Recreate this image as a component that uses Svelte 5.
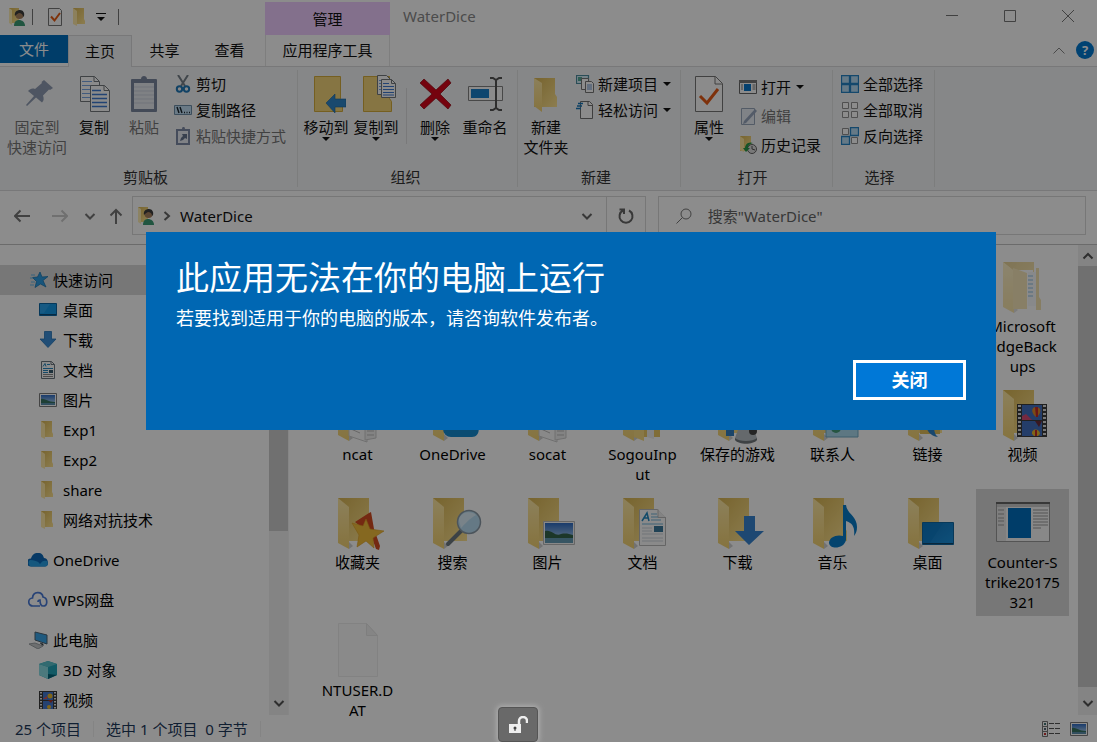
<script>
	const tabs = ['共享', '查看'];

	const sidebar = [
		{ icon: 'star', label: '快速访问', active: true },
		{ icon: 'desktop', label: '桌面', child: true },
		{ icon: 'down', label: '下载', child: true },
		{ icon: 'doc', label: '文档', child: true },
		{ icon: 'picture', label: '图片', child: true },
		{ icon: 'folder', label: 'Exp1', child: true },
		{ icon: 'folder', label: 'Exp2', child: true },
		{ icon: 'folder', label: 'share', child: true },
		{ icon: 'folder', label: '网络对抗技术', child: true },
		{ icon: 'onedrive', label: 'OneDrive', root: true },
		{ icon: 'wps', label: 'WPS网盘', root: true },
		{ icon: 'pc', label: '此电脑', root: true },
		{ icon: 'cube', label: '3D 对象', child: true },
		{ icon: 'film', label: '视频', child: true }
	];

	const files = [
		{ base: 'f-folder', over: 'f-pages', label: 'Microsoft\nEdgeBack\nups', last: true, faded: true },
		{ base: 'f-folder', over: 'f-papers', label: 'ncat' },
		{ base: 'f-folder', over: 'f-cloud', label: 'OneDrive' },
		{ base: 'f-folder', over: 'f-papers', label: 'socat' },
		{ base: 'f-folder', over: 'f-sub', label: 'SogouInp\nut' },
		{ base: 'f-folder', over: 'f-game', label: '保存的游戏' },
		{ base: 'f-folder', over: 'f-contact', label: '联系人' },
		{ base: 'f-folder', over: 'f-link', label: '链接' },
		{ base: 'f-folder', over: 'f-film', label: '视频' },
		{ base: 'f-folder', over: 'f-star', label: '收藏夹' },
		{ base: 'f-folder', over: 'f-search', label: '搜索' },
		{ base: 'f-folder', over: 'f-picture', label: '图片' },
		{ base: 'f-folder', over: 'f-doc', label: '文档' },
		{ base: 'f-folder', over: 'f-down', label: '下载' },
		{ base: 'f-folder', over: 'f-music', label: '音乐' },
		{ base: 'f-folder', over: 'f-desktop', label: '桌面' },
		{ base: 'f-app', label: 'Counter-S\ntrike20175\n321', selected: true },
		{ base: 'f-blank', label: 'NTUSER.D\nAT' }
	];

	let open = $state(true);
	let query = $state('');
</script>

{#snippet ico(name, cls)}
	<svg class={cls} aria-hidden="true"><use href="#{name}" /></svg>
{/snippet}

{#snippet big(icon, label, caret, disabled)}
	<button class="big" {disabled}>
		{@render ico(icon, 'big-icon')}
		<span>{label}</span>
		{#if caret}<i class="caret"></i>{/if}
	</button>
{/snippet}

{#snippet small(icon, label, caret, disabled)}
	<button class="small" {disabled}>
		{@render ico(icon, 'icon')}
		<span>{label}</span>
		{#if caret}<i class="caret"></i>{/if}
	</button>
{/snippet}

<svg class="sprite" aria-hidden="true">
	<defs>
		<linearGradient id="gold" x1="0" y1="0" x2="1" y2="1"><stop offset="0" stop-color="#d9b654" /><stop offset="1" stop-color="#ffe492" /></linearGradient>
		<linearGradient id="flap" x1="0" y1="0" x2="0" y2="1"><stop offset="0" stop-color="#ffe9a6" /><stop offset="1" stop-color="#f3d272" /></linearGradient>
		<linearGradient id="blue" x1="0" y1="0" x2="1" y2="1"><stop offset="0" stop-color="#0e74bd" /><stop offset="1" stop-color="#1c93e0" /></linearGradient>
		<linearGradient id="sky" x1="0" y1="0" x2="0" y2="1"><stop offset="0" stop-color="#2f6cc4" /><stop offset="1" stop-color="#c8e4f6" /></linearGradient>
	</defs>

	<symbol id="folder" viewBox="0 0 18 18"><path d="M2 0h11v11l1 2v3H2z" fill="url(#gold)" /><path d="M2 0l4 3v15l-4-2z" fill="#ffe9a8" /></symbol>
	<symbol id="user" viewBox="0 0 18 18"><path d="M0 0h10v15H0z" fill="url(#gold)" /><path d="M0 0l3 2v15l-3-2z" fill="#ffeeb5" /><path d="M5 18c0-4 2-6 5-6s6 2 6 6z" fill="#3c9c76" /><circle cx="10.500" cy="7" r="4" fill="#a8815f" /><path d="M6 8c-1-4 2-6 5-6s5 3 4 6l-1 1c0-3-2-4-4-4-2 1-3 2-4 3z" fill="#3d3d3d" /></symbol>
	<symbol id="checkdoc" viewBox="0 0 18 18"><path d="M2.500.5h11l2 2v15h-13z" fill="#fdfdfd" stroke="#777" /><path d="M5 8.500l3.500 4L14 5" fill="none" stroke="#e55b13" stroke-width="2" /></symbol>
	<symbol id="star" viewBox="0 0 18 18"><path d="M10 1l2 5 6-.5-5 4 3 6.500-5.500-3L5 16.500l1.500-6-4-4 5-.5z" fill="#2d9be0" stroke="#1471ad" stroke-width=".7" /><path d="M1 4h4M0 7h3M1 11h4M0 14h4" stroke="#62b3e6" /></symbol>
	<symbol id="desktop" viewBox="0 0 18 18"><path d="M.5 2.500h17v12H.5z" fill="#1599e8" stroke="#0c67a4" /><path d="M1 3h10L5 12H1z" fill="#38aef2" opacity=".6" /><path d="M1 13.500h16" stroke="#0d4e7a" /></symbol>
	<symbol id="down" viewBox="0 0 18 18"><path d="M5.500.5h7V8H17l-8 8.500L1 8h4.500z" fill="#3d8fd8" stroke="#2574b8" stroke-width=".8" /></symbol>
	<symbol id="doc" viewBox="0 0 18 18"><path d="M2.500.5h10l3 3v14h-13z" fill="#fdfdfd" stroke="#6c7780" /><path d="M12 .5v3h3.500" fill="none" stroke="#6c7780" /><path d="M4 5.500l2-3 1 3M8 3.500h3M4 7.500h10M4 9.500h5M4 11.500h5" stroke="#2585bd" fill="none" /><path d="M4 13.500h10M4 15.500h10" stroke="#8b8b8b" /><path d="M10 9h4v3h-4z" fill="#38596d" /></symbol>
	<symbol id="picture" viewBox="0 0 18 18"><path d="M.5 2.500h17v13H.5z" fill="#fff" stroke="#7d7d7d" /><path d="M2 4h14v10H2z" fill="url(#sky)" /><path d="M2 8c3-1 7 3 14 3v3H2z" fill="#377461" /><path d="M2 12h14v2H2z" fill="#5c91ae" /></symbol>
	<symbol id="onedrive" viewBox="0 0 20 18"><path d="M3 15.500a4 4 0 010-8C4 4 6 2 10 2c4 0 5 2 6 5 3 0 4 3 4 5s-1 3.500-3 3.500z" fill="#0d69b8" /><path d="M3 15.500c-3-1-3-5-1-6.500 4 0 8 1 10 4 2-3 4-4 7-3 2 3 0 5.500-2 5.500z" fill="#28a0e6" /></symbol>
	<symbol id="wps" viewBox="0 0 20 18"><path d="M12 15H5a4 4 0 01-.5-8C5 0 14 0 15 6c5 1 5 9 0 9-3 0-3-3-3-6-1 0-2 1-2 2" fill="none" stroke="#4a7bd8" stroke-width="1.700" /></symbol>
	<symbol id="pc" viewBox="0 0 20 18"><path d="M7 1l12 3v9L7 9z" fill="#39a5e8" stroke="#4d6373" /><path d="M12 12l3 1v2" stroke="#59656c" /><path d="M1 13l6-1 8 3-5 3z" fill="#c6cacd" stroke="#9ca2a6" /></symbol>
	<symbol id="cube" viewBox="0 0 18 18"><path d="M9 0l9 3v11l-9 4-9-4V3z" fill="#24a5b9" /><path d="M0 3l9 3v12l-9-4z" fill="#8adce3" /><path d="M0 3l9-3 9 3-9 3z" fill="#5cc2cc" /><path d="M9 13l9 1-9 4z" fill="#05657a" /></symbol>
	<symbol id="film" viewBox="0 0 18 18"><path d="M0 0h18v18H0z" fill="#3b3b3b" /><path d="M4 1h10v8H4zM4 10h10v8H4z" fill="#4478cf" /><path d="M2 1v17M16 1v17" stroke="#e8e8e8" stroke-width="2" stroke-dasharray="1.500 1.500" /><circle cx="11" cy="5" r="2.500" fill="#e9b82c" /><path d="M4 8l4-3v3z" fill="#d95656" /><path d="M9 9h5l-2 3z" fill="#a53427" /><circle cx="10" cy="16" r="2" fill="#e9b82c" /></symbol>

	<symbol id="pin" viewBox="0 0 40 38"><path d="M27 5l9 8-3 2-1-.5-6 6c1 3 1 5-1 7l-6-5L10 31l-1-1 8-9-6-5c2-2 4-3 7-2l7-6-.5-1z" fill="#8f9cb3" /></symbol>
	<symbol id="copy" viewBox="0 0 40 38"><path d="M6.500 1.500h14l5 5v20h-19z" fill="#fdfdfd" stroke="#74797d" /><path d="M20 1.500v5h5" fill="none" stroke="#74797d" /><path d="M8 6.500h10M8 10.500h14M8 14.500h14M8 18.500h14M8 22.500h14" stroke="#78a6e3" /><path d="M16.500 10.500h14l5 5v21h-19z" fill="#fdfdfd" stroke="#74797d" /><path d="M30 10.500v5h5" fill="none" stroke="#74797d" /><path d="M18 15.500h9M18 19.500h15M18 23.500h15M18 27.500h15M18 31.500h15" stroke="#3e7bd2" stroke-width="1.300" /></symbol>
	<symbol id="paste" viewBox="0 0 40 38"><path d="M8 4h24a1 1 0 011 1v31a1 1 0 01-1 1H8a1 1 0 01-1-1V5a1 1 0 011-1z" fill="#7a879f" /><path d="M10 8h20v26H10z" fill="#e8ebf1" /><path d="M10 12h20M10 16h20M10 20h20M10 24h20M10 28h20" stroke="#cbd2df" /><path d="M12 8V4h5c0-4 6-4 6 0h5v4z" fill="#7a879f" /></symbol>
	<symbol id="cut" viewBox="0 0 18 18"><path d="M4 0l7 11M14 0L7 11" stroke="#77818a" stroke-width="2" fill="none" /><circle cx="5.500" cy="14" r="2.700" fill="none" stroke="#1f79b8" stroke-width="2" /><circle cx="12.500" cy="14" r="2.700" fill="none" stroke="#1f79b8" stroke-width="2" /></symbol>
	<symbol id="path" viewBox="0 0 18 18"><path d="M.5 4.500h17v9H.5z" fill="#c1dff5" stroke="#6e8fa8" /><path d="M3 6l2 6M6 6l2 6M10 11.500h1M12.500 11.500h1M15 11.500h1" stroke="#18242c" stroke-width="1.400" /></symbol>
	<symbol id="shortcut" viewBox="0 0 18 18"><path d="M3 3h12v14H3z" fill="#e9edf4" stroke="#7f8ba6" stroke-width="2" /><path d="M6 4V2h2c0-3 3-3 3 0h2v2z" fill="#7f8ba6" /><path d="M6 14l1-3 2-2-1-2h5v5l-2-1-2 2z" fill="#66758f" /></symbol>
	<symbol id="moveto" viewBox="0 0 40 38"><path d="M8.500 1.500h26v22l2 3v10h-28z" fill="#f4d57b" stroke="#d5ad3c" /><path d="M20 28l9-9v5h11v8H29v6z" fill="#2f86c9" stroke="#1d65a0" stroke-width=".6" /></symbol>
	<symbol id="copyto" viewBox="0 0 40 38"><path d="M7.500 1.500h26v22l2 3v10h-28z" fill="#f4d57b" stroke="#d5ad3c" /><path d="M21.500.5h9l4 4v15h-13z" fill="#fdfdfd" stroke="#74797d" /><path d="M23 5.500h3M23 8.500h3M23 11.500h3M23 14.500h3" stroke="#78a6e3" /><path d="M25.500 4.500h10l4 4v14h-14z" fill="#fdfdfd" stroke="#74797d" /><path d="M35.500 4.500v4h4" fill="none" stroke="#74797d" /><path d="M27 8.500h6M27 11.500h11M27 14.500h11M27 17.500h11M27 20h11" stroke="#3e7bd2" /></symbol>
	<symbol id="delete" viewBox="0 0 40 38"><path d="M9 4l12 11L33 4l3 4-11 11 11 11-3 4-12-11L9 34l-4-4 12-11L5 8z" fill="#d6061a" stroke="#8e0914" stroke-width=".7" /></symbol>
	<symbol id="rename" viewBox="0 0 40 38"><path d="M3.500 11.500h34v14h-34z" fill="#fdfdfd" stroke="#848484" /><path d="M6 14h18v9H6z" fill="#1b80cb" /><path d="M25 3h3l3 2 3-2h3M25 35h3l3-2 3 2h3M31 4v30" fill="none" stroke="#555" stroke-width="2" /></symbol>
	<symbol id="newfolder" viewBox="0 0 40 38"><path d="M8 3h21v16l2 3v10H8z" fill="url(#gold)" /><path d="M8 3l8 5v29l-8-6z" fill="url(#flap)" /></symbol>
	<symbol id="newitem" viewBox="0 0 18 18"><path d="M.5.5h12v8H.5z" fill="#d5edf7" stroke="#4d8c9f" stroke-width="1.200" /><path d="M2 2h4v4H2z" fill="#55a896" /><path d="M5.500 3.500h7v11h-7z" fill="#fff" stroke="#777" /><path d="M9.500 6.500h6l2 2v9h-8z" fill="#fff" stroke="#777" /><path d="M11 10h5M11 12h5M11 14h5" stroke="#6b96d1" /></symbol>
	<symbol id="easy" viewBox="0 0 18 18"><path d="M4.500.5h9l3 3v14h-12z" fill="#fdfdfd" stroke="#717171" /><path d="M12 .5v4h4" fill="none" stroke="#717171" /><path d="M2 2.500h5M1 5h5M0 7.500h5" stroke="#1676b8" stroke-width="1.400" /></symbol>
	<symbol id="props" viewBox="0 0 40 38"><path d="M6.500 1.500h20l7 7v28h-27z" fill="#fdfdfd" stroke="#777" /><path d="M26 1.500V9h7" fill="none" stroke="#777" /><path d="M11 21l7 7 11-14" fill="none" stroke="#e65a15" stroke-width="3" /></symbol>
	<symbol id="open" viewBox="0 0 18 18"><path d="M.5 2.500h17v13H.5z" fill="#fdfdfd" stroke="#666" /><path d="M0 2h18v3H0z" fill="#777" /><path d="M5 6h7v7H5z" fill="#0875c8" /><path d="M2 7h2M2 9h2M2 11h2M13.500 7h3M13.500 9h3M13.500 11h3" stroke="#777" /></symbol>
	<symbol id="edit" viewBox="0 0 18 18"><path d="M2.500 1.500h13v16h-13z" fill="#e9eef6" stroke="#98a6bb" /><path d="M5 14L16 2l2 2L7 16l-3 1z" fill="#98a7be" /></symbol>
	<symbol id="history" viewBox="0 0 18 18"><path d="M1 0h11v15H1z" fill="url(#gold)" /><path d="M1 0l4 3v13l-4-2z" fill="#ffe7a0" /><circle cx="13" cy="13" r="4.500" fill="#ddd" stroke="#636363" /><path d="M13 10v3l3 1" stroke="#555" fill="none" /><path d="M14 7C9 5 6 9 6 12H4l3 4 4-4H9c0-2 1-4 5-5z" fill="#299a49" /></symbol>
	<symbol id="selall" viewBox="0 0 18 18"><path d="M.5.5h8v8h-8zM9.500.5h8v8h-8zM.5 9.500h8v8h-8zM9.500 9.500h8v8h-8z" fill="#b9dcf5" stroke="#2684c5" stroke-width="1.300" /></symbol>
	<symbol id="selnone" viewBox="0 0 18 18"><path d="M1.500 1.500h6v6h-6zM10.500 1.500h6v6h-6zM1.500 10.500h6v6h-6zM10.500 10.500h6v6h-6z" fill="#fff" stroke="#919191" /></symbol>
	<symbol id="selinv" viewBox="0 0 18 18"><path d="M1.500 1.500h6v6h-6zM10.500 10.500h6v6h-6z" fill="#fff" stroke="#919191" /><path d="M9.500.5h8v8h-8zM.5 9.500h8v8h-8z" fill="#b9dcf5" stroke="#2684c5" stroke-width="1.300" /></symbol>

	<symbol id="f-folder" viewBox="0 0 64 60"><path d="M12 6h31v29l3 4v10H12z" fill="url(#gold)" /><path d="M23 50v7l4-3z" fill="#cfcfcf" /><path d="M12 6l11 9v42l-11-6z" fill="url(#flap)" /></symbol>
	<symbol id="f-pages" viewBox="0 0 64 60"><path d="M28 14h14v40H28z" fill="#fff" /><path d="M37 16h8v34h-8z" fill="#f2f6fb" /><path d="M37 20h5M37 24h5M37 28h5M37 32h5M37 36h5M37 40h5" stroke="#80b8dd" stroke-width="1.500" /><path d="M22 12l14 5v36H22z" fill="#f2d98f" /><path d="M12 6l10 8v41l-10-6z" fill="url(#flap)" /><path d="M45 12h3v29l2 3v10h-5z" fill="#efd282" /></symbol>
	<symbol id="f-papers" viewBox="0 0 64 60"><path d="M23 20h14l4 4v34l-18-6z" fill="#fafafa" stroke="#ccc" /><path d="M39 20l11 3v31l-11 2z" fill="#eee" stroke="#ccc" /><path d="M25 45l9 4M25 41l9 4M41 47h7M41 51h7" stroke="#bbb" /></symbol>
	<symbol id="f-cloud" viewBox="0 0 64 60"><path d="M30 53a8 8 0 010-16c4-12 20-9 21 2 9 0 9 14 0 14z" fill="#158bd0" /></symbol>
	<symbol id="f-sub" viewBox="0 0 64 60"><path d="M24 24h25v29H24z" fill="#e9c765" /><path d="M23 24l10 6v27l-10-4z" fill="#f7da82" /><path d="M36 28h7v27l-7-2z" fill="#eee" /></symbol>
	<symbol id="f-game" viewBox="0 0 64 60"><path d="M20 40h8v12h-8z" fill="#327ec0" /><path d="M33 43h14l4 11c-3 6-19 6-22 0z" fill="#b8c0c5" /><path d="M29 54c4 4 18 4 22 0v2c-4 5-18 5-22 0z" fill="#71797d" /><circle cx="47" cy="47" r="4" fill="#444" /></symbol>
	<symbol id="f-contact" viewBox="0 0 64 60"><path d="M25 30h32v23H25z" fill="#a9d9ed" stroke="#71a9c4" /><circle cx="35" cy="44" r="5" fill="#459b78" /></symbol>
	<symbol id="f-link" viewBox="0 0 64 60"><path d="M24 32h20v18H24z" fill="#e1bd59" /><path d="M30 40c0 6 4 12 12 13-4-3-4-8-4-14z" fill="#2d81c7" /></symbol>
	<symbol id="f-film" viewBox="0 0 64 60"><path d="M26 20h30v33H26z" fill="#3b3b3b" /><path d="M31 21h20v15H31zM31 37h20v15H31z" fill="#426fc0" /><path d="M28.500 21v31M53.500 21v31" stroke="#ddd" stroke-width="3" stroke-dasharray="2 2" /><path d="M31 32l4-2 6 6H31z" fill="#d84c75" /><path d="M45 33c-6-5-4-10 0-10s7 4 1 10z" fill="#df8b29" /><path d="M44 23h3v10h-2z" fill="#c3292c" /><path d="M44 37h7l-3 6z" fill="#6a2c3c" /><path d="M41 50c-1-6 8-6 8 0l-2 2h-4z" fill="#e9b82c" /><path d="M44 46h2v6h-2z" fill="#c3292c" /></symbol>
	<symbol id="f-star" viewBox="0 0 64 60"><path d="M43 21l2-1 3 17 6 17-1 4-3-1-5-14-16-13z" fill="#d44b21" /><path d="M40 27l4 10 14 2-11 7 1 10-8-7-9 6 2-12-7-12 11 3z" fill="#f3bd3b" stroke="#dba023" stroke-width=".6" /></symbol>
	<symbol id="f-search" viewBox="0 0 64 60"><path d="M40 39L27 52" stroke="#6d7980" stroke-width="4" stroke-linecap="round" /><circle cx="48" cy="30" r="11.500" fill="#b9ddf2" stroke="#8a9aa6" stroke-width="1.500" /><path d="M38 28c1-8 12-10 17-5-7 4-11 9-15 13z" fill="#dceffa" /></symbol>
	<symbol id="f-picture" viewBox="0 0 64 60"><path d="M27.500 29.500h31v23h-31z" fill="#f7f7f7" stroke="#bbb" /><path d="M29 31h28v20H29z" fill="url(#sky)" /><path d="M29 39c7-2 10 6 16 3 5-1 8 0 12 1v3H29z" fill="#34644b" /><path d="M29 46h28v5H29z" fill="#659bb5" /></symbol>
	<symbol id="f-doc" viewBox="0 0 64 60"><path d="M28.500 17.500h18l8 8v28h-26z" fill="#fcfcfc" stroke="#b8b8b8" /><path d="M47 17.500v8h8" fill="#eee" stroke="#b8b8b8" /><path d="M31 29l5-8 2 8M33 26h4" fill="none" stroke="#2389c1" stroke-width="1.500" /><path d="M40 22h6M40 25h7M40 28h10M31 32h21" stroke="#70b3d8" /><path d="M31 36h10M31 39h10M31 42h21M31 46h21M31 49h21" stroke="#ccd4da" /><path d="M43 34h9v6h-9z" fill="#3b789c" /></symbol>
	<symbol id="f-down" viewBox="0 0 64 60"><path d="M38 24h11v15h9L43 53 29 39h9z" fill="#3784cf" /></symbol>
	<symbol id="f-music" viewBox="0 0 64 60"><path d="M42 13h3c1 9 11 11 11 22 0 4-1 6-3 9 1-8-1-13-8-15v19c-2 9-16 10-17 3 0-6 8-9 14-7z" fill="#087cc9" /></symbol>
	<symbol id="f-desktop" viewBox="0 0 64 60"><path d="M26.500 30.500h31v22h-31z" fill="url(#blue)" stroke="#1268a2" /><path d="M27 31h20L33 52h-6z" fill="#0a7bc6" opacity=".6" /><path d="M27 51.500h30" stroke="#134a6e" /></symbol>
	<symbol id="f-app" viewBox="0 0 64 60"><path d="M5.500 10.500h53v39h-53z" fill="#f7f7f7" stroke="#999" /><path d="M5 10h54v2H5z" fill="#666" /><path d="M6 12h52v3H6z" fill="#ccc" /><path d="M6 15h9v34H6z" fill="#e8e8e8" /><path d="M17 16h23v30H17z" fill="#0070c0" /><path d="M7 18h6M7 22h6M7 26h6M7 29h6M7 33h6M42 18h15M42 21h15M42 24h15M42 27h15M42 30h15M42 33h15M42 36h8" stroke="#9a9a9a" /></symbol>
	<symbol id="f-blank" viewBox="0 0 64 60"><path d="M12.500 3.500h28l11 12v41h-39z" fill="#fbfcfc" stroke="#ededed" /><path d="M40.500 3.500v12h11z" fill="#f2f2f2" stroke="#e6e6e6" /></symbol>
	<symbol id="details" viewBox="0 0 18 18"><path d="M.5 1.500h5v5h-5zM.5 6.500h5v5h-5zM.5 11.500h5v5h-5z" fill="#fff" stroke="#777" /><path d="M2 3h2v2H2z" fill="#477" /><path d="M2 8h2v2H2z" fill="#567" /><path d="M2 13h2v2H2z" fill="#c33" /><path d="M7 3.500h5M13 3.500h5M7 8.500h5M13 8.500h5M7 13.500h5M13 13.500h5" stroke="#555" /></symbol>
	<symbol id="chev-down" viewBox="0 0 12 12"><path d="M1.500 4L6 8.500 10.500 4" fill="none" stroke="currentColor" stroke-width="2" /></symbol>
	<symbol id="chev-up" viewBox="0 0 12 12"><path d="M1.500 8.500L6 4l4.500 4.500" fill="none" stroke="currentColor" stroke-width="2" /></symbol>
</svg>

<div class="window">
	<header class="titlebar">
		<div class="quick">
			{@render ico('user', 'icon')}
			<i class="sep"></i>
			<button aria-label="属性">{@render ico('checkdoc', 'icon')}</button>
			<button aria-label="新建文件夹">{@render ico('folder', 'icon')}</button>
			<button class="more" aria-label="自定义"><i class="caret"></i></button>
			<i class="sep"></i>
		</div>
		<div class="manage">管理</div>
		<div class="title">WaterDice</div>
		<div class="controls">
			<button aria-label="最小化"><svg viewBox="0 0 12 12"><path d="M0 5.500h12" /></svg></button>
			<button aria-label="最大化"><svg viewBox="0 0 12 12"><path d="M.5.5h11v11H.5z" /></svg></button>
			<button aria-label="关闭窗口"><svg viewBox="0 0 12 12"><path d="M0 0l12 12M12 0L0 12" /></svg></button>
		</div>
	</header>

	<nav class="tabs">
		<button class="tab file">文件</button>
		<button class="tab home">主页</button>
		{#each tabs as tab}
			<button class="tab">{tab}</button>
		{/each}
		<button class="tab tools">应用程序工具</button>
		<div class="help">
			<svg class="collapse" viewBox="0 0 12 7"><path d="M.5 6.500L6 1l5.500 5.500" fill="none" stroke="#888" /></svg>
			<button class="question" aria-label="帮助">?</button>
		</div>
	</nav>

	<section class="ribbon">
		<div class="group clipboard">
			<div class="tools-row">
				<div class="pin">{@render big('pin', '固定到\n快速访问', false, true)}</div>
				{@render big('copy', '复制')}
				{@render big('paste', '粘贴', false, true)}
				<div class="stack">
					{@render small('cut', '剪切')}
					{@render small('path', '复制路径')}
					{@render small('shortcut', '粘贴快捷方式', false, true)}
				</div>
			</div>
			<div class="group-label">剪贴板</div>
		</div>
		<div class="group organize">
			<div class="tools-row">
				{@render big('moveto', '移动到', true)}
				{@render big('copyto', '复制到', true)}
				<i class="divider"></i>
				{@render big('delete', '删除', true)}
				{@render big('rename', '重命名')}
			</div>
			<div class="group-label">组织</div>
		</div>
		<div class="group new">
			<div class="tools-row">
				{@render big('newfolder', '新建\n文件夹')}
				<div class="stack">
					{@render small('newitem', '新建项目', true)}
					{@render small('easy', '轻松访问', true)}
				</div>
			</div>
			<div class="group-label">新建</div>
		</div>
		<div class="group opening">
			<div class="tools-row">
				{@render big('props', '属性', true)}
				<div class="stack loose">
					{@render small('open', '打开', true)}
					{@render small('edit', '编辑', false, true)}
					{@render small('history', '历史记录')}
				</div>
			</div>
			<div class="group-label">打开</div>
		</div>
		<div class="group select">
			<div class="tools-row">
				<div class="stack">
					{@render small('selall', '全部选择')}
					{@render small('selnone', '全部取消')}
					{@render small('selinv', '反向选择')}
				</div>
			</div>
			<div class="group-label">选择</div>
		</div>
	</section>

	<div class="navbar">
		<div class="arrows">
			<button aria-label="后退"><svg viewBox="0 0 16 16"><path d="M16 8H1M6.500 2.500L1 8l5.500 5.500" /></svg></button>
			<button aria-label="前进" class="off"><svg viewBox="0 0 16 16"><path d="M0 8h15M9.500 2.500L15 8l-5.500 5.500" /></svg></button>
			<button aria-label="最近" class="recent">{@render ico('chev-down', 'chev')}</button>
			<button aria-label="上移"><svg viewBox="0 0 16 16"><path d="M8 16V2M2.500 7.500L8 2l5.500 5.500" /></svg></button>
		</div>
		<div class="address">
			{@render ico('user', 'icon')}
			<svg class="crumb" viewBox="0 0 8 12"><path d="M1.500 2L6 6l-4.500 4" fill="none" stroke="#666" stroke-width="2" /></svg>
			<span class="path">WaterDice</span>
			<button class="drop" aria-label="历史地址">{@render ico('chev-down', 'chev')}</button>
			<button class="refresh" aria-label="刷新"><svg viewBox="0 0 18 18"><path d="M12 3.500A6.500 6.500 0 116 3.500M2.500 2.500H7V7" fill="none" stroke="#666" stroke-width="2" /></svg></button>
		</div>
		<label class="search">
			<svg viewBox="0 0 16 16"><circle cx="10" cy="6" r="5" /><path d="M6.500 9.500L.5 15.500" /></svg>
			<input type="text" aria-label="搜索" placeholder={'搜索"WaterDice"'} bind:value={query} />
		</label>
	</div>

	<main class="body">
		<aside class="sidebar">
			<div class="tree">
				{#each sidebar as item}
					<a href="#{item.icon}" class="node" class:active={item.active} class:child={item.child} class:root={item.root}>
						{@render ico(item.icon, 'icon')}
						<span>{item.label}</span>
					</a>
				{/each}
			</div>
			<div class="scroll">
				<span class="cap">{@render ico('chev-up', 'chev')}</span>
				<div class="track"><div class="thumb part"></div></div>
				<span class="cap end">{@render ico('chev-down', 'chev')}</span>
			</div>
		</aside>
		<div class="files">
			{#each files as file}
				<button class="item" class:selected={file.selected} class:last={file.last}>
					<svg class="thumbnail" class:faded={file.faded} aria-hidden="true">
						<use href="#{file.base}" />
						{#if file.over}<use href="#{file.over}" />{/if}
					</svg>
					<span>{file.label}</span>
				</button>
			{/each}
		</div>
		<div class="scroll">
			<span class="cap">{@render ico('chev-up', 'chev')}</span>
			<div class="track"><div class="thumb"></div></div>
			<span class="cap end">{@render ico('chev-down', 'chev')}</span>
		</div>
	</main>

	<footer class="status">
		<span class="cell">25 个项目</span>
		<span class="cell">选中 1 个项目&nbsp; 0 字节</span>
		<div class="views">
			<button aria-label="详细信息">{@render ico('details', 'icon')}</button>
			<button aria-label="大图标">{@render ico('picture', 'icon')}</button>
		</div>
	</footer>
</div>

{#if open}
	<div class="backdrop">
		<div class="dialog" role="dialog" aria-labelledby="dialog-title">
			<h1 id="dialog-title">此应用无法在你的电脑上运行</h1>
			<p>若要找到适用于你的电脑的版本，请咨询软件发布者。</p>
			<button class="close" onclick={() => open = false}>关闭</button>
		</div>
		<button class="lock" aria-label="锁定">
			<svg viewBox="0 0 20 18"><path d="M1 8h12v9H1z" fill="#eee" /><path d="M11 8V5a4 4 0 018 0v2" fill="none" stroke="#eee" stroke-width="2.500" /><circle cx="7" cy="12" r="1.500" fill="#444" /><path d="M6.500 12h1v3h-1z" fill="#444" /></svg>
		</button>
	</div>
{/if}

<style>
	:global(body) {
		margin: 0;
		overflow: hidden;
		font-family: "Noto Sans", "Noto Sans CJK SC", sans-serif;
		font-size: 15px;
		line-height: 20px;
		color: #111;
	}
	button {
		display: flex;
		align-items: center;
		justify-content: center;
		padding: 0;
		border: none;
		background: transparent;
		font: inherit;
		color: inherit;
	}
	.sprite {
		position: absolute;
		width: 0;
		height: 0;
	}
	.icon {
		width: 18px;
		height: 18px;
		flex-shrink: 0;
	}
	.chev {
		width: 12px;
		height: 12px;
	}
	.caret {
		border: 4px solid transparent;
		border-top-color: #111;
		border-bottom: none;
	}
	.window {
		display: flex;
		flex-direction: column;
		height: 100vh;
		background: #fff;
	}

	.titlebar {
		display: flex;
		height: 35px;
	}
	.quick {
		display: flex;
		align-items: center;
		width: 256px;
		height: 33px;
		padding-left: 9px;
	}
	.quick .sep {
		width: 1px;
		height: 16px;
		margin: 0 13px 0 5px;
		background: #777;
	}
	.quick button {
		margin-right: 7px;
	}
	.quick .more {
		width: 10px;
		height: 8px;
		border-top: 1px solid #111;
		align-items: flex-end;
	}
	.manage {
		width: 125px;
		margin-top: 2px;
		line-height: 34px;
		text-align: center;
		background: #efcdff;
	}
	.title {
		flex: 1;
		padding-left: 13px;
		line-height: 32px;
		color: #8a8a8a;
	}
	.controls {
		display: flex;
	}
	.controls button {
		width: 58px;
		height: 32px;
	}
	.controls svg {
		width: 12px;
		height: 12px;
		fill: none;
		stroke: #777;
	}

	.tabs {
		display: flex;
		height: 31px;
		border-bottom: 1px solid #dadbdc;
	}
	.tab {
		box-sizing: border-box;
		width: 65px;
		height: 31px;
		padding-bottom: 2px;
	}
	.tab.file {
		width: 68px;
		height: 28px;
		padding-bottom: 0;
		background: #0070c0;
		color: #fff;
	}
	.tab.home {
		width: 64px;
		height: 32px;
		border: 1px solid #dadbdc;
		border-bottom: none;
		background: #f5f6f7;
	}
	.tab.tools {
		width: 125px;
		margin-left: 3px;
		border: solid #e5e5e5;
		border-width: 0 1px;
	}
	.help {
		display: flex;
		align-items: center;
		gap: 11px;
		height: 30px;
		margin-left: auto;
		padding-right: 3px;
	}
	.collapse {
		width: 12px;
		height: 7px;
	}
	.question {
		width: 18px;
		height: 18px;
		border-radius: 50%;
		background: #0078d0;
		color: #fff;
		font-size: 13px;
		font-weight: 700;
	}

	.ribbon {
		display: flex;
		height: 123px;
		background: #f5f6f7;
		border-bottom: 1px solid #dadbdc;
	}
	.group {
		box-sizing: border-box;
		display: flex;
		flex-direction: column;
		margin: 3px 0;
		border-right: 1px solid #e2e3e4;
	}
	.clipboard {
		padding: 0 11px 0 5px;
	}
	.organize {
		padding: 0 7px 0 3px;
	}
	.new {
		padding: 0 9px 0 3px;
	}
	.opening {
		padding: 0 11px 0 3px;
	}
	.select {
		padding: 0 11px 0 3px;
	}
	.tools-row {
		display: flex;
		flex: 1;
	}
	.group-label {
		height: 20px;
		text-align: center;
		color: #333;
	}
	.big {
		flex-direction: column;
		justify-content: flex-start;
		width: 50px;
		padding-top: 5px;
		white-space: pre-line;
	}
	.pin .big {
		width: 64px;
	}
	.big-icon {
		width: 40px;
		height: 38px;
		margin-bottom: 4px;
	}
	.small {
		gap: 4px;
		height: 26px;
		white-space: nowrap;
	}
	.small .caret {
		margin-left: 1px;
	}
	.big:disabled,
	.small:disabled {
		color: #777;
	}
	.stack {
		display: flex;
		flex-direction: column;
		align-items: flex-start;
		margin-left: 5px;
		padding-top: 1px;
	}
	.stack.loose {
		gap: 3px;
		padding-top: 4px;
	}
	.divider {
		width: 1px;
		height: 56px;
		margin: 18px 3px 0 5px;
		background: #dcdddf;
	}

	.navbar {
		display: flex;
		align-items: flex-start;
		height: 48px;
		padding-top: 5px;
		border-bottom: 1px solid #c4c4c4;
	}
	.arrows {
		display: flex;
		align-items: center;
		width: 132px;
		height: 39px;
	}
	.arrows button {
		width: 38px;
		height: 28px;
	}
	.arrows button:first-child {
		margin-left: 3px;
	}
	.arrows .recent {
		width: 22px;
		color: #777;
	}
	.arrows button:last-child {
		width: 30px;
	}
	.arrows button > svg:not(.chev) {
		width: 16px;
		height: 16px;
		fill: none;
		stroke: #777;
		stroke-width: 2;
	}
	.arrows .off > svg:not(.chev) {
		stroke: #ccc;
	}
	.address {
		box-sizing: border-box;
		display: flex;
		align-items: center;
		flex: 509;
		height: 39px;
		padding-left: 5px;
		border: 1px solid #d9d9d9;
	}
	.crumb {
		width: 8px;
		height: 12px;
		margin: 0 9px 0 7px;
	}
	.path {
		flex: 1;
	}
	.drop {
		width: 38px;
		height: 37px;
		color: #666;
	}
	.refresh {
		width: 39px;
		height: 37px;
		border-left: 1px solid #d9d9d9;
	}
	.refresh svg {
		width: 18px;
		height: 18px;
	}
	.search {
		box-sizing: border-box;
		display: flex;
		align-items: center;
		flex: 428;
		height: 39px;
		margin: 0 11px 0 12px;
		border: 1px solid #d9d9d9;
	}
	.search svg {
		width: 16px;
		height: 16px;
		margin: 0 16px 0 17px;
		fill: none;
		stroke: #777;
	}
	.search input {
		flex: 1;
		min-width: 0;
		border: none;
		outline: none;
		background: transparent;
		font: inherit;
		padding: 0;
	}
	.search input::placeholder {
		color: #666;
		opacity: 1;
	}

	.body {
		display: flex;
		flex: 1;
		min-height: 0;
	}
	.sidebar {
		display: flex;
		width: 288px;
		border-right: 1px solid #f4f4f4;
		margin-right: 2px;
	}
	.tree {
		flex: 1;
		padding-top: 20px;
		overflow: hidden;
	}
	.node {
		display: flex;
		align-items: center;
		gap: 5px;
		height: 30px;
		padding-left: 30px;
		color: #000;
		text-decoration: none;
	}
	.node.active {
		background: #d9d9d9;
	}
	.node.child {
		gap: 6px;
		padding-left: 39px;
	}
	.node.root {
		margin-top: 10px;
		padding-left: 28px;
	}
	.node.root .icon {
		width: 20px;
	}
	.scroll {
		display: flex;
		flex-direction: column;
		width: 19px;
		background: #f0f0f0;
	}
	.cap {
		display: flex;
		align-items: center;
		justify-content: center;
		height: 21px;
		color: #555;
	}
	.cap.end {
		height: 24px;
		padding-top: 4px;
	}
	.track {
		flex: 1;
	}
	.thumb {
		height: 100%;
		background: #cdcdcd;
	}
	.thumb.part {
		height: 63%;
	}
	.files {
		display: grid;
		grid-template-columns: repeat(auto-fill, 93px);
		grid-auto-rows: max-content;
		gap: 1px 2px;
		flex: 1;
		padding: 8px 0 0 20px;
		overflow: clip;
		overflow-clip-margin: 10px;
	}
	.item {
		flex-direction: column;
		justify-content: flex-start;
		padding: 3px 0 4px;
		color: #000;
		white-space: pre-line;
	}
	.item.last {
		grid-column: -2;
	}
	.item.selected {
		background: #d9d9d9;
	}
	.thumbnail {
		width: 64px;
		height: 60px;
	}
	.thumbnail.faded {
		opacity: 0.6;
	}

	.status {
		display: flex;
		align-items: center;
		height: 27px;
		padding-left: 15px;
		color: #1e395b;
	}
	.cell {
		padding-right: 12px;
		margin-right: 12px;
		border-right: 1px solid #f0f0f0;
		line-height: 16px;
	}
	.views {
		display: flex;
		gap: 10px;
		margin-left: auto;
		padding-right: 9px;
	}

	.backdrop {
		position: fixed;
		inset: 0;
		box-sizing: border-box;
		padding: 232px 101px 0 146px;
		background: rgba(0, 0, 0, 0.45);
	}
	.dialog {
		display: flex;
		flex-direction: column;
		padding: 26px 30px 30px;
		background: #0067b3;
		color: #fff;
	}
	.dialog h1 {
		margin: 0;
		font-size: 33px;
		font-weight: 400;
		line-height: 40px;
	}
	.dialog p {
		margin: 8px 0 30px;
		font-size: 18px;
		line-height: 24px;
	}
	.close {
		align-self: flex-end;
		width: 113px;
		height: 40px;
		border: 3px solid #fff;
		background: #0078d7;
		font-size: 18px;
		font-weight: 700;
	}
	.lock {
		position: absolute;
		left: 498px;
		bottom: 0;
		width: 40px;
		height: 35px;
		border: 1px solid #555;
		border-radius: 4px;
		background: #696969;
		box-shadow: 0 0 4px 2px #a8a8a8;
	}
	.lock svg {
		width: 20px;
		height: 18px;
	}
</style>
